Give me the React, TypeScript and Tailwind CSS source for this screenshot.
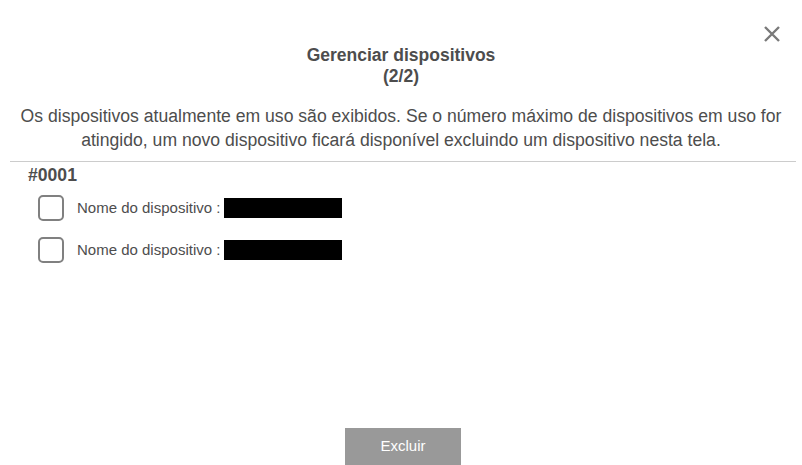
export default function App() {
    const rows = ["Nome do dispositivo :", "Nome do dispositivo :"];
    return (
        <div
            className="relative w-[802px] h-[465px] bg-white overflow-hidden text-[#4d4d4d]"
            style={{ fontFamily: '"Liberation Sans", Arial, sans-serif' }}
        >
            <button className="absolute right-[20px] top-[24px] w-[20px] h-[20px] flex items-center justify-center text-[#7a7a7a]">
                <svg width="18" height="18" viewBox="0 0 18 18">
                    <path d="M2 2 L16 16 M16 2 L2 16" stroke="currentColor" strokeWidth="2.4" strokeLinecap="butt" />
                </svg>
            </button>

            <div className="flex flex-col h-full">
                <div className="pt-[45px] text-center font-bold text-[17.5px] leading-[21px]">
                    <div>Gerenciar dispositivos</div>
                    <div>(2/2)</div>
                </div>
                <p className="mt-[17px] text-center text-[17.6px] leading-[24px] px-[10px] whitespace-nowrap">
                    Os dispositivos atualmente em uso são exibidos. Se o número máximo de dispositivos em uso for
                    <br />
                    atingido, um novo dispositivo ficará disponível excluindo um dispositivo nesta tela.
                </p>
                <div className="mt-[9px] mx-[10px] mr-[6px] h-px bg-[#cccccc]" />
                <div className="pl-[28px] pt-[3px] font-bold text-[17.6px] leading-[20px]">#0001</div>
                <div className="flex flex-col gap-[16px] pt-[10px] pl-[38px]">
                    {rows.map((label, i) => (
                        <div key={i} className="flex items-center h-[26px]">
                            <div className="w-[26px] h-[26px] rounded-[5px] border-2 border-[#808080]" />
                            <span className="ml-[13px] text-[15px] text-[#4d4d4d]">{label}</span>
                            <span className="ml-[4px] w-[118px] h-[20px] bg-black" />
                        </div>
                    ))}
                </div>
                <div className="mt-auto flex justify-center">
                    <button className="w-[116px] h-[37px] ml-[4px] bg-[#999999] text-white text-[15px]">
                        Excluir
                    </button>
                </div>
            </div>
        </div>
    );
}
